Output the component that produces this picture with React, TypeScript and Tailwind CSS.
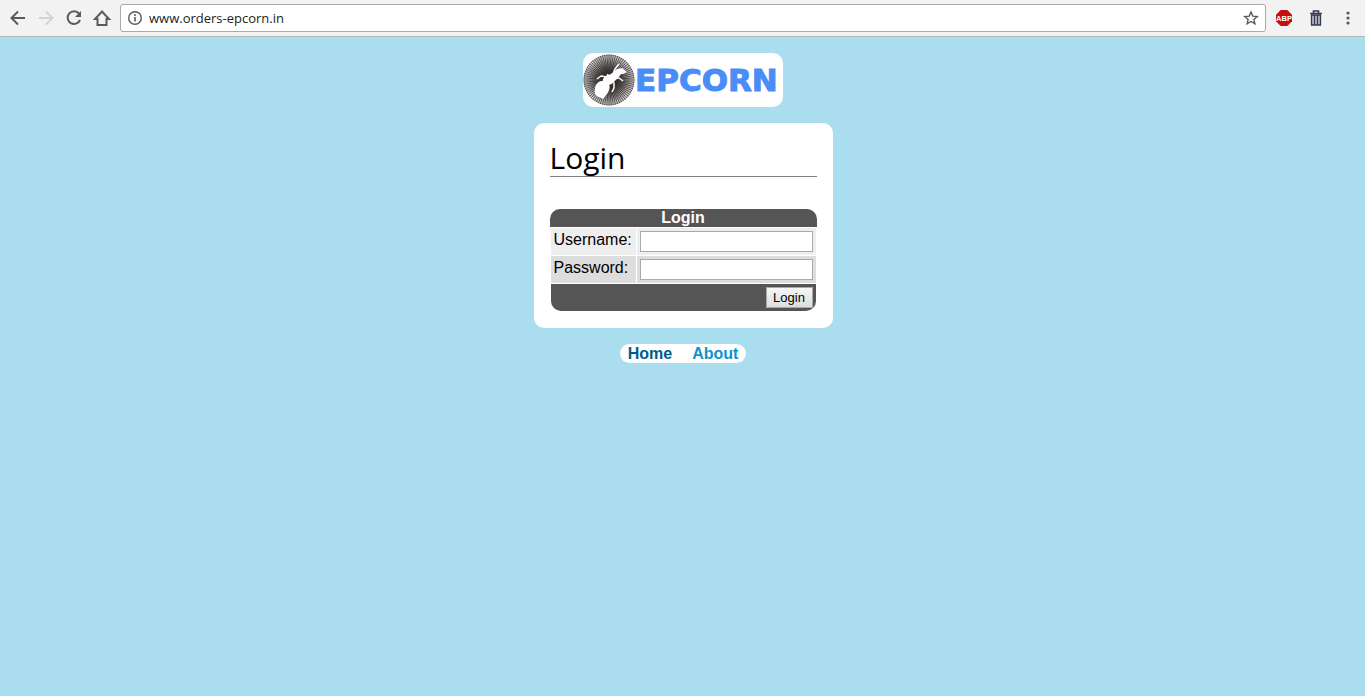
import React from 'react';

const rays = Array.from({ length: 72 }, (_, i) => {
  const a = (i * Math.PI) / 36;
  return `M26 26L${(26 + 25.5 * Math.cos(a)).toFixed(2)} ${(26 + 25.5 * Math.sin(a)).toFixed(2)}`;
}).join('');

function AntMark() {
  return (
    <svg viewBox="0 0 52 52" className="size-[52px] shrink-0" aria-hidden="true">
      <defs>
        <radialGradient id="disc">
          <stop offset="0" stopColor="#222" />
          <stop offset="0.5" stopColor="#6a6664" />
          <stop offset="1" stopColor="#dddbd9" />
        </radialGradient>
      </defs>
      <circle cx="26" cy="26" r="25.5" fill="url(#disc)" />
      <path d={rays} stroke="#2b2827" strokeWidth="0.7" fill="none" />
      <circle cx="26" cy="26" r="25" fill="none" stroke="#4d4a49" strokeWidth="0.5" />
      <g fill="#fff">
        <path d="M12 34C13 28 19 25 24 28C28 31 27 36 24 40L20 45L16 43C12 42 11 38 12 34Z" />
        <path d="M20 25C23 20 27 21 31 19L35 24C32 26 30 31 25 31C22 31 19 28 20 25Z" />
        <path d="M28 20L34 15L39 14L44 18L40 20L38 20L35 24L32 26Z" />
      </g>
      <g stroke="#fff" strokeWidth="1.5" fill="none" strokeLinejoin="round">
        <path d="M30 20L32 15L36 10" />
        <path d="M24 23L18 22L14 25" />
        <path d="M28 27L31 29L31 34L29 38" />
        <path d="M32 24L36 24L40 27" />
        <path d="M24 23L25 20" />
      </g>
    </svg>
  );
}

function Toolbar() {
  return (
    <header className="flex h-[37px] items-center border-b border-[#b6b4b6] bg-[#f2f2f2] pl-2 text-[#5a5a5a]">
      <nav className="flex gap-2">
        <button aria-label="Back" className="size-5">
          <svg viewBox="0 0 20 20" fill="none" stroke="currentColor" strokeWidth="2"><path d="M17 10H4M10 3.5L3.5 10L10 16.5" /></svg>
        </button>
        <button aria-label="Forward" className="size-5 text-[#d3d3d3]">
          <svg viewBox="0 0 20 20" fill="none" stroke="currentColor" strokeWidth="2"><path d="M3 10H16M10 3.5L16.5 10L10 16.5" /></svg>
        </button>
        <button aria-label="Reload" className="size-5">
          <svg viewBox="0 0 20 20"><path d="M15 5.5A6.4 6.4 0 1 0 16 12" fill="none" stroke="currentColor" strokeWidth="2" /><path d="M17 3V9H11Z" fill="currentColor" /></svg>
        </button>
        <button aria-label="Home page" className="size-5">
          <svg viewBox="0 0 20 20" fill="none" stroke="currentColor" strokeWidth="2"><path d="M3 11H5.5V17H14.5V11H17L10 3.5Z" /></svg>
        </button>
      </nav>
      <div className="ml-2 flex h-7 min-w-0 flex-1 items-center rounded-[3px] border border-[#a9a9a9] bg-white px-1.5">
        <svg viewBox="0 0 16 16" className="size-4 shrink-0" fill="none" stroke="currentColor" aria-hidden="true">
          <circle cx="8" cy="8" r="6.3" strokeWidth="1.4" />
          <path d="M8 7V11.5M8 4.3V6" strokeWidth="1.6" />
        </svg>
        <input
          aria-label="Address"
          defaultValue="www.orders-epcorn.in"
          className="ml-1.5 min-w-0 flex-1 bg-transparent font-['Open_Sans',sans-serif] text-[13px] text-[#222] outline-none"
        />
        <button aria-label="Bookmark this page" className="size-4">
          <svg viewBox="0 0 16 16" fill="none" stroke="currentColor" strokeWidth="1.4"><path d="M8 2L9.8 6.1L14.2 6.5L10.9 9.4L11.9 13.8L8 11.5L4.1 13.8L5.1 9.4L1.8 6.5L6.2 6.1Z" /></svg>
        </button>
      </div>
      <div className="flex items-center gap-4 pr-[9px] pl-2.5">
        <button aria-label="Adblock Plus" className="size-4">
          <svg viewBox="0 0 16 16">
            <path d="M4.7 0H11.3L16 4.7V11.3L11.3 16H4.7L0 11.3V4.7Z" fill="#c70d0f" />
            <text x="8" y="10.7" textAnchor="middle" fill="#fff" fontFamily="Liberation Sans, sans-serif" fontSize="7.5" fontWeight="700">ABP</text>
          </svg>
        </button>
        <button aria-label="Clear data" className="size-4">
          <svg viewBox="0 0 16 16" fill="none" stroke="#343a55">
            <path d="M2 3.5H14M5.5 3V1H10.5V3" strokeWidth="1.6" />
            <path d="M3.5 5H12.5V15H3.5Z" fill="#b4b6c0" strokeWidth="1.3" />
            <path d="M6.5 5V15M9.5 5V15" strokeWidth="1.2" />
          </svg>
        </button>
        <button aria-label="Menu" className="size-4">
          <svg viewBox="0 0 16 16" fill="currentColor"><circle cx="8" cy="3" r="1.6" /><circle cx="8" cy="8" r="1.6" /><circle cx="8" cy="13" r="1.6" /></svg>
        </button>
      </div>
    </header>
  );
}

const field = 'block h-[21px] w-[173px] border border-[#a9a9a9] bg-white px-0.5 text-[13px] outline-none';

export default function App() {
  return (
    <div className="min-h-screen bg-[#aaddee] font-['Liberation_Sans',Arial,sans-serif] text-base leading-[18px] text-black">
      <Toolbar />
      <main className="flex flex-col items-center gap-4 py-4 pl-px">
        <div className="flex h-[54px] w-[200px] items-center rounded-[10px] bg-white">
          <AntMark />
          <span className="font-['DejaVu_Sans',sans-serif] text-[31px] leading-[54px] font-bold text-[#4b8df8] [-webkit-text-stroke:1px_#4b8df8]">EPCORN</span>
        </div>
        <section className="rounded-[10px] bg-white p-4">
          <h1 className="mb-8 border-b border-[#808080] font-['Open_Sans',sans-serif] text-[30px] leading-[37px]">Login</h1>
          <form onSubmit={(e) => e.preventDefault()}>
            <table className="border-separate border-spacing-px">
              <caption className="rounded-t-[10px] bg-[#555] font-bold text-white">Login</caption>
              <tbody>
                <tr className="bg-[#eee]">
                  <td className="w-[85px] p-[3px] align-top"><label htmlFor="username">Username:</label></td>
                  <td className="p-[3px]"><input id="username" type="text" className={field} /></td>
                </tr>
                <tr className="bg-[#ddd]">
                  <td className="p-[3px] align-top"><label htmlFor="password">Password:</label></td>
                  <td className="p-[3px]"><input id="password" type="password" className={field} /></td>
                </tr>
                <tr>
                  <td colSpan={2} className="rounded-b-[10px] bg-[#555] p-[3px]">
                    <button type="submit" className="ml-auto block h-[21px] w-[47px] border border-[#a9a9a9] bg-linear-to-b from-[#f6f6f6] to-[#dddddd] text-[13px] leading-[19px]">Login</button>
                  </td>
                </tr>
              </tbody>
            </table>
          </form>
        </section>
        <nav className="flex gap-5 rounded-[10px] bg-white px-2 pt-px font-bold">
          <a href="#home" className="text-[#005b8c]">Home</a>
          <a href="#about" className="text-[#0d93cb]">About</a>
        </nav>
      </main>
    </div>
  );
}
